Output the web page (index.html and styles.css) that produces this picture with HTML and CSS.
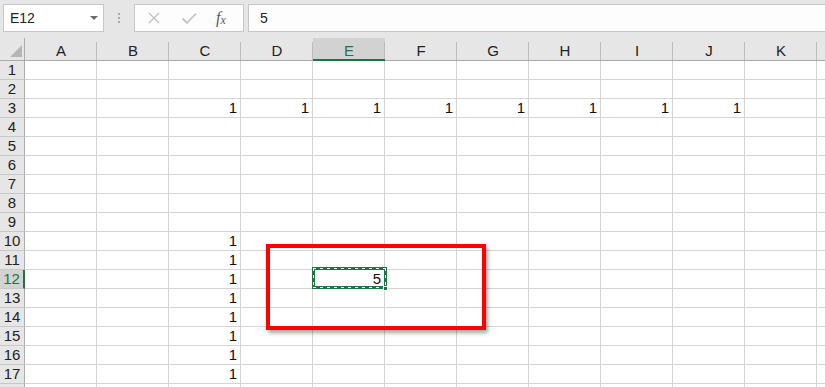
FILE: index.html
```html
<!DOCTYPE html>
<html>
<head>
<meta charset="utf-8">
<link rel="stylesheet" href="styles.css">
</head>
<body>
<div class="app">
  <div class="toolbar">
    <div class="namebox"><span>E12</span><span class="arrow"></span></div>
    <div class="dots"><i></i><i></i><i></i></div>
    <div class="fxbox">
      <svg class="ic" width="14" height="14" viewBox="0 0 14 14"><path d="M2 2 L12 12 M12 2 L2 12" stroke="#c4c4c4" stroke-width="1.4" fill="none"/></svg>
      <svg class="ic" width="16" height="14" viewBox="0 0 16 14"><path d="M1.5 7.5 L6 12 L15 2.5" stroke="#c4c4c4" stroke-width="1.8" fill="none"/></svg>
      <span class="fx">f<span class="fxx">x</span></span>
    </div>
    <div class="formula">5</div>
  </div>
  <div class="sheet">
    <div class="corner"></div>
    <div class="ch">A</div><div class="ch">B</div><div class="ch">C</div><div class="ch">D</div><div class="ch sel">E</div><div class="ch">F</div><div class="ch">G</div><div class="ch">H</div><div class="ch">I</div><div class="ch">J</div><div class="ch">K</div><div class="ch"></div>

    <div class="rh">1</div><div class="c"></div><div class="c"></div><div class="c"></div><div class="c"></div><div class="c"></div><div class="c"></div><div class="c"></div><div class="c"></div><div class="c"></div><div class="c"></div><div class="c"></div><div class="c"></div>
    <div class="rh">2</div><div class="c"></div><div class="c"></div><div class="c"></div><div class="c"></div><div class="c"></div><div class="c"></div><div class="c"></div><div class="c"></div><div class="c"></div><div class="c"></div><div class="c"></div><div class="c"></div>
    <div class="rh">3</div><div class="c"></div><div class="c"></div><div class="c">1</div><div class="c">1</div><div class="c">1</div><div class="c">1</div><div class="c">1</div><div class="c">1</div><div class="c">1</div><div class="c">1</div><div class="c"></div><div class="c"></div>
    <div class="rh">4</div><div class="c"></div><div class="c"></div><div class="c"></div><div class="c"></div><div class="c"></div><div class="c"></div><div class="c"></div><div class="c"></div><div class="c"></div><div class="c"></div><div class="c"></div><div class="c"></div>
    <div class="rh">5</div><div class="c"></div><div class="c"></div><div class="c"></div><div class="c"></div><div class="c"></div><div class="c"></div><div class="c"></div><div class="c"></div><div class="c"></div><div class="c"></div><div class="c"></div><div class="c"></div>
    <div class="rh">6</div><div class="c"></div><div class="c"></div><div class="c"></div><div class="c"></div><div class="c"></div><div class="c"></div><div class="c"></div><div class="c"></div><div class="c"></div><div class="c"></div><div class="c"></div><div class="c"></div>
    <div class="rh">7</div><div class="c"></div><div class="c"></div><div class="c"></div><div class="c"></div><div class="c"></div><div class="c"></div><div class="c"></div><div class="c"></div><div class="c"></div><div class="c"></div><div class="c"></div><div class="c"></div>
    <div class="rh">8</div><div class="c"></div><div class="c"></div><div class="c"></div><div class="c"></div><div class="c"></div><div class="c"></div><div class="c"></div><div class="c"></div><div class="c"></div><div class="c"></div><div class="c"></div><div class="c"></div>
    <div class="rh">9</div><div class="c"></div><div class="c"></div><div class="c"></div><div class="c"></div><div class="c"></div><div class="c"></div><div class="c"></div><div class="c"></div><div class="c"></div><div class="c"></div><div class="c"></div><div class="c"></div>
    <div class="rh">10</div><div class="c"></div><div class="c"></div><div class="c">1</div><div class="c"></div><div class="c"></div><div class="c"></div><div class="c"></div><div class="c"></div><div class="c"></div><div class="c"></div><div class="c"></div><div class="c"></div>
    <div class="rh">11</div><div class="c"></div><div class="c"></div><div class="c">1</div><div class="c"></div><div class="c"></div><div class="c"></div><div class="c"></div><div class="c"></div><div class="c"></div><div class="c"></div><div class="c"></div><div class="c"></div>
    <div class="rh sel">12</div><div class="c"></div><div class="c"></div><div class="c">1</div><div class="c"></div><div class="c active">5<span class="ants"></span><span class="handle"></span></div><div class="c"></div><div class="c"></div><div class="c"></div><div class="c"></div><div class="c"></div><div class="c"></div><div class="c"></div>
    <div class="rh">13</div><div class="c"></div><div class="c"></div><div class="c">1</div><div class="c"></div><div class="c"></div><div class="c"></div><div class="c"></div><div class="c"></div><div class="c"></div><div class="c"></div><div class="c"></div><div class="c"></div>
    <div class="rh">14</div><div class="c"></div><div class="c"></div><div class="c">1</div><div class="c"></div><div class="c"></div><div class="c"></div><div class="c"></div><div class="c"></div><div class="c"></div><div class="c"></div><div class="c"></div><div class="c"></div>
    <div class="rh">15</div><div class="c"></div><div class="c"></div><div class="c">1</div><div class="c"></div><div class="c"></div><div class="c"></div><div class="c"></div><div class="c"></div><div class="c"></div><div class="c"></div><div class="c"></div><div class="c"></div>
    <div class="rh">16</div><div class="c"></div><div class="c"></div><div class="c">1</div><div class="c"></div><div class="c"></div><div class="c"></div><div class="c"></div><div class="c"></div><div class="c"></div><div class="c"></div><div class="c"></div><div class="c"></div>
    <div class="rh">17</div><div class="c"></div><div class="c"></div><div class="c">1</div><div class="c"></div><div class="c"></div><div class="c"></div><div class="c"></div><div class="c"></div><div class="c"></div><div class="c"></div><div class="c"></div><div class="c"></div>
    <div class="rh"></div><div class="c"></div><div class="c"></div><div class="c"></div><div class="c"></div><div class="c"></div><div class="c"></div><div class="c"></div><div class="c"></div><div class="c"></div><div class="c"></div><div class="c"></div><div class="c"></div>
  </div>
  <div class="redbox"></div>
</div>
</body>
</html>
```
FILE: styles.css
```css
* { box-sizing: border-box; }
html, body { margin: 0; padding: 0; }
body {
  width: 825px;
  height: 387px;
  overflow: hidden;
  background: #fff;
  font-family: "Liberation Sans", Arial, sans-serif;
}
.app {
  position: relative;
  width: 825px;
  height: 387px;
  overflow: hidden;
}
.toolbar {
  height: 38px;
  background: #e6e6e6;
  display: flex;
  align-items: flex-start;
  padding: 4px 0 0 3px;
}
.namebox {
  width: 101px;
  height: 28px;
  background: #fff;
  border: 1px solid #c6c6c6;
  display: flex;
  align-items: center;
  justify-content: space-between;
  padding: 0 4px 0 6px;
  font-size: 14px;
  color: #222;
}
.arrow {
  width: 0;
  height: 0;
  border-left: 4px solid transparent;
  border-right: 4px solid transparent;
  border-top: 4px solid #6a6a6a;
  margin-right: 1px;
}
.dots {
  width: 30px;
  height: 28px;
  display: flex;
  flex-direction: column;
  align-items: center;
  justify-content: center;
  gap: 2px;
}
.dots i {
  width: 2px;
  height: 2px;
  background: #a8a8a8;
  display: block;
}
.fxbox {
  width: 110px;
  height: 28px;
  background: #fdfdfd;
  border: 1px solid #c6c6c6;
  display: flex;
  align-items: center;
  padding-left: 12px;
}
.fxbox .ic:nth-child(1) { margin-right: 20px; }
.fxbox .ic:nth-child(2) { margin-right: 19px; }
.fx {
  font-family: "Liberation Serif", "Times New Roman", serif;
  font-style: italic;
  font-size: 16px;
  color: #5a5a5a;
  line-height: 1;
  display: flex;
  align-items: baseline;
}
.fxx { font-size: 12px; margin-left: 0; position: relative; top: 1px; }
.formula {
  flex: 1;
  height: 28px;
  margin-left: 4px;
  background: #fdfdfd;
  border: 1px solid #c6c6c6;
  border-right: none;
  display: flex;
  align-items: center;
  padding-left: 11px;
  font-size: 14px;
  color: #222;
}
.sheet {
  display: grid;
  grid-template-columns: 25px repeat(11, 72px) 40px;
  grid-template-rows: 23px;
  grid-auto-rows: 19px;
  font-size: 15px;
  color: #1a1a1a;
}
.corner {
  background: #e6e6e6;
  border-bottom: 1px solid #ababab;
  border-right: 1px solid #ababab;
  display: flex;
  align-items: flex-end;
  justify-content: flex-end;
  padding: 0 2px 3px 0;
}
.corner::before {
  content: "";
  width: 0;
  height: 0;
  border-left: 12px solid transparent;
  border-bottom: 12px solid #b6b6b6;
}
.ch {
  background: linear-gradient(#bcbcbc, #bcbcbc) right 4px / 1px calc(100% - 4px) no-repeat, #e6e6e6;
  border-bottom: 1px solid #ababab;
  display: flex;
  align-items: flex-end;
  justify-content: center;
  padding-bottom: 1px;
  line-height: 17px;
  color: #222;
}
.ch.sel {
  background: linear-gradient(#bcbcbc, #bcbcbc) right 4px / 1px calc(100% - 4px) no-repeat, #d2d2d2;
  border-bottom: 2px solid #217346;
  padding-bottom: 0;
  color: #217346;
}
.rh {
  background: #e6e6e6;
  border-right: 1px solid #ababab;
  border-bottom: 1px solid #c8c8c8;
  display: flex;
  align-items: center;
  justify-content: center;
  line-height: 18px;
  color: #222;
}
.rh.sel {
  background: #d2d2d2;
  border-right: 2px solid #217346;
  color: #217346;
}
.c {
  border-right: 1px solid #d4d4d4;
  border-bottom: 1px solid #d4d4d4;
  text-align: right;
  padding-right: 3px;
  line-height: 18px;
  color: #111;
}
.c.active {
  position: relative;
}
.ants {
  position: absolute;
  left: -1px;
  top: -3px;
  width: 75px;
  height: 22px;
  border: 3px solid #217346;
}
.ants::after {
  content: "";
  position: absolute;
  left: -2px;
  top: -2px;
  right: -2px;
  bottom: -2px;
  background:
    repeating-linear-gradient(to right, #fff 0 3px, transparent 3px 7px) left top / 100% 1px no-repeat,
    repeating-linear-gradient(to right, #fff 0 3px, transparent 3px 7px) left bottom / 100% 1px no-repeat,
    repeating-linear-gradient(to bottom, #fff 0 3px, transparent 3px 7px) left top / 1px 100% no-repeat,
    repeating-linear-gradient(to bottom, #fff 0 3px, transparent 3px 7px) right top / 1px 100% no-repeat;
}
.handle {
  position: absolute;
  right: -4px;
  bottom: -3px;
  width: 5px;
  height: 5px;
  background: #217346;
  border: 1px solid #fff;
}
.redbox {
  position: absolute;
  left: 266px;
  top: 244px;
  width: 220px;
  height: 86px;
  border: 4px solid #ff0000;
  box-shadow: 2px 3px 4px rgba(0, 0, 0, 0.35);
}
```
